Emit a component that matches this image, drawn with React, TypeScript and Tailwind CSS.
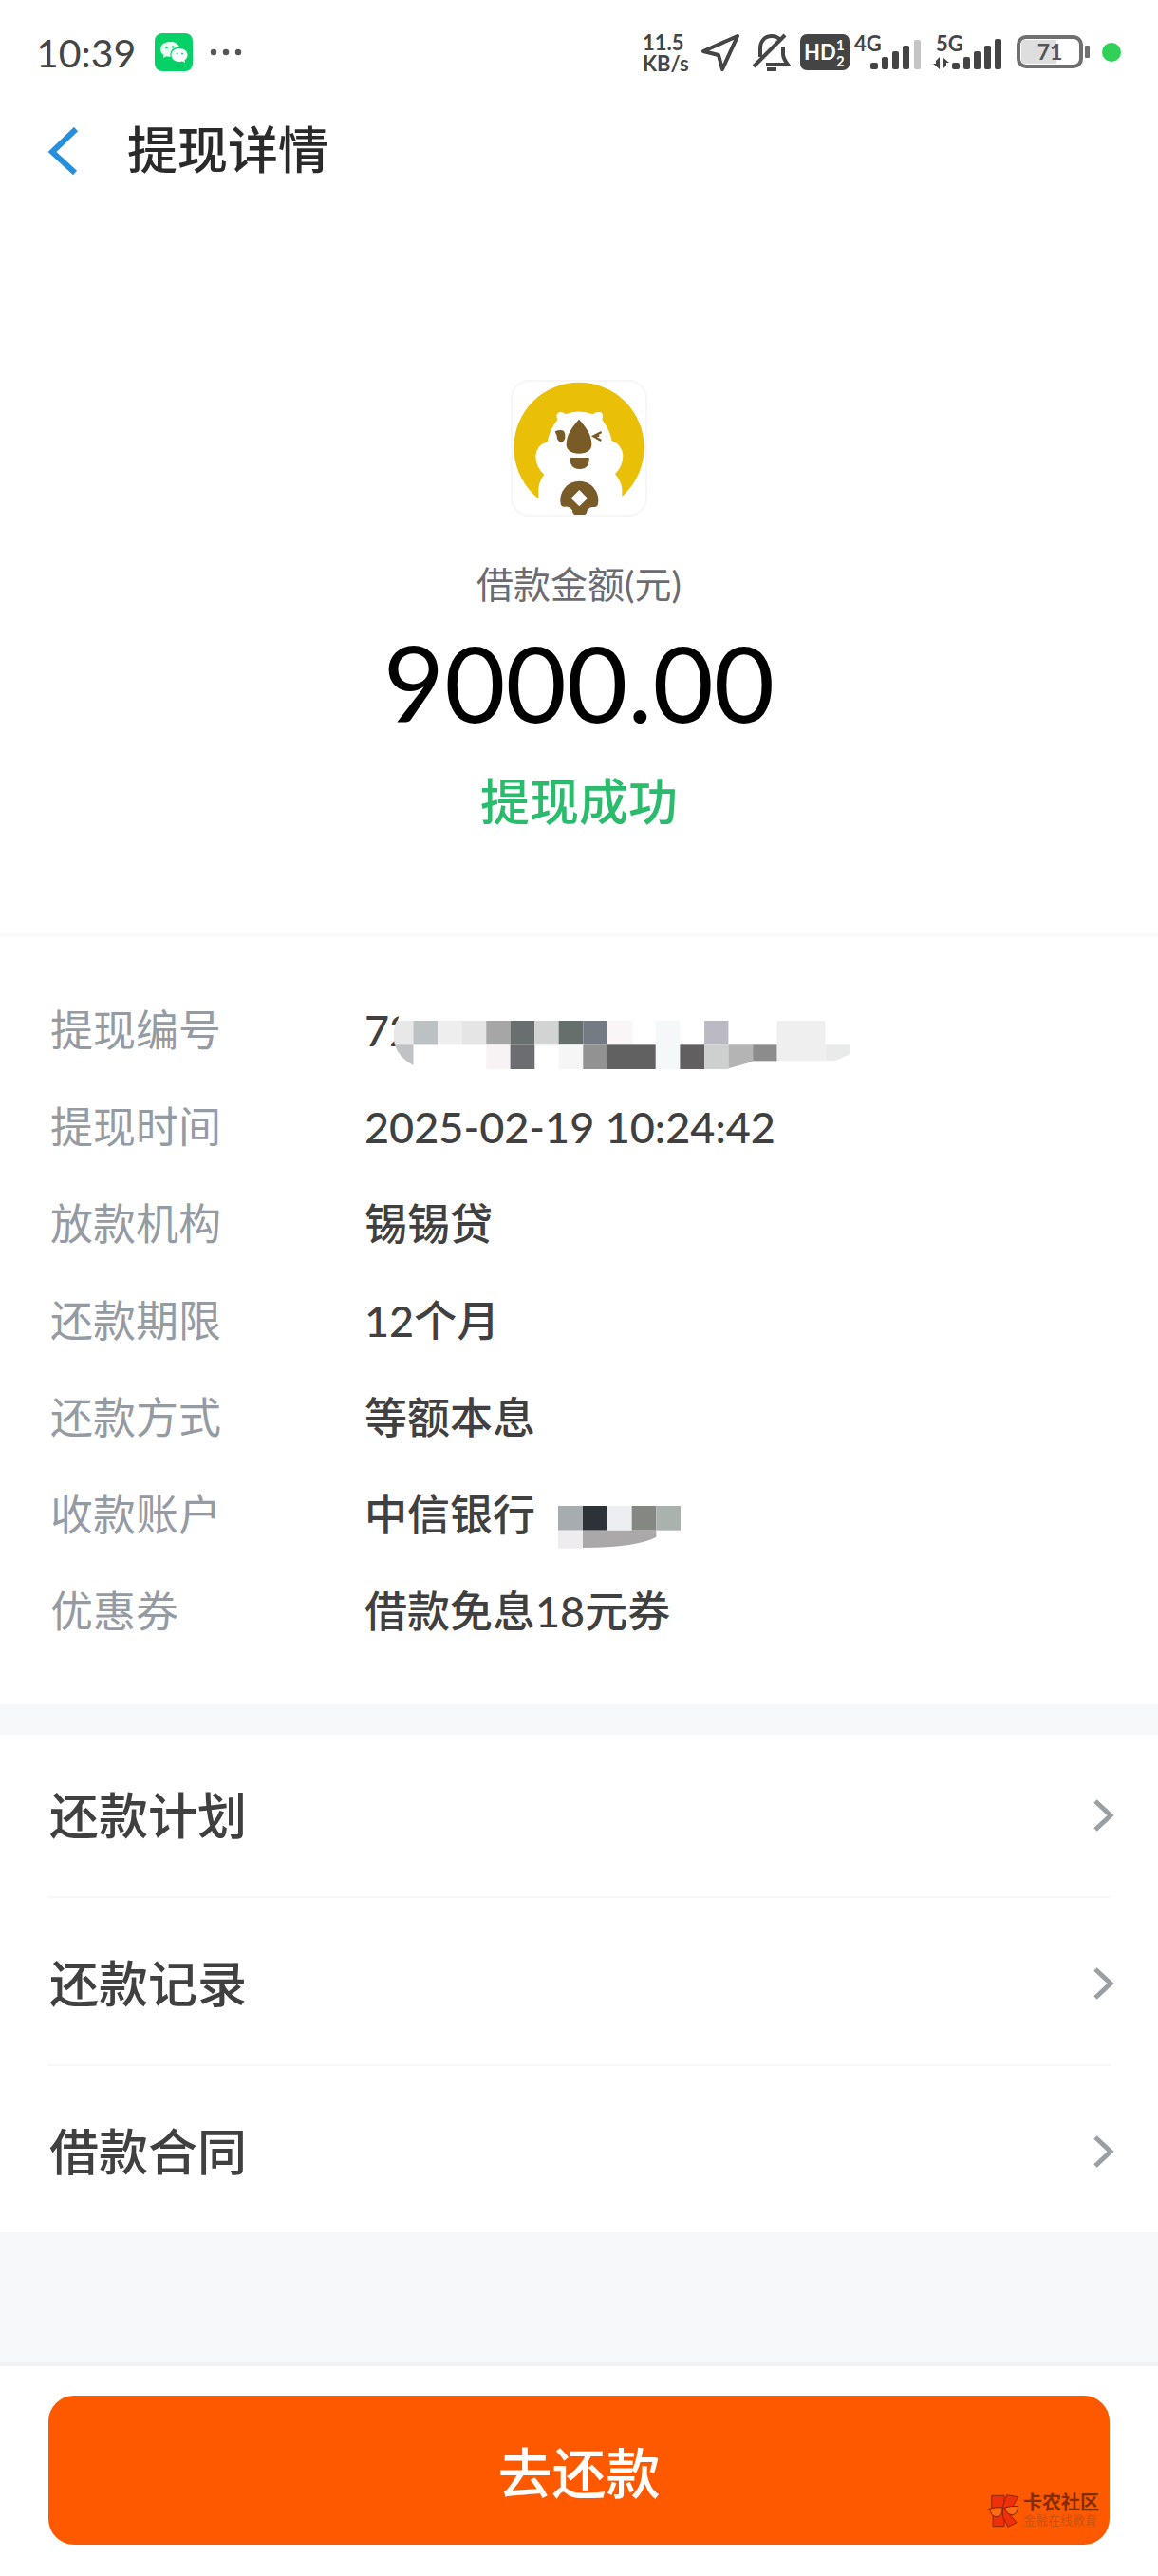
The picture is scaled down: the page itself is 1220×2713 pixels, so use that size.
import React from "react";

const DETAILS = [
  { label: "提现编号", value: "72", mask: "serial" },
  { label: "提现时间", value: "2025-02-19 10:24:42" },
  { label: "放款机构", value: "锡锡贷" },
  { label: "还款期限", value: "12个月" },
  { label: "还款方式", value: "等额本息" },
  { label: "收款账户", value: "中信银行", mask: "card" },
  { label: "优惠券", value: "借款免息18元券" },
];

const LINKS = ["还款计划", "还款记录", "借款合同"];

function WeChatIcon() {
  return (
    <svg viewBox="0 0 40 40" className="size-10" aria-hidden="true">
      <rect width="40" height="40" rx="8" fill="#06d167" />
      <path d="M16 9c-6 0-10 3.600-10 8 0 2.600 1.400 4.700 3.600 6.100L9 26l3.500-1.800c1.500.4 2.500.5 4 .5C15.500 18 20 14.500 26 14.500 25 11 21 9 16 9z" fill="#e9fff2" />
      <path d="M26 16c-5 0-8.500 3.200-8.500 7s3.500 7 8.500 7c1.200 0 2.200-.2 3.200-.5L32 31l-.6-2.600c1.900-1.300 3.100-3.200 3.100-5.400 0-3.800-3.500-7-8.500-7z" fill="#fff" />
      <g fill="#06d167">
        <circle cx="12.500" cy="15" r="1.300" />
        <circle cx="19" cy="14.500" r="1.300" />
        <circle cx="23.500" cy="21.500" r="1" />
        <circle cx="29" cy="21.500" r="1" />
      </g>
    </svg>
  );
}

function StatusBar() {
  return (
    <div className="flex h-[108px] items-center justify-between pl-[38px] pr-[39px] pt-[2px] text-[#454545]">
      <div className="flex items-center">
        <span className="w-[125px] text-[41px] leading-none">10:39</span>
        <WeChatIcon />
        <svg viewBox="0 0 34 8" className="ml-[18px] h-2 w-[34px]" fill="#555" aria-hidden="true">
          <circle cx="4" cy="4" r="3.200" />
          <circle cx="17" cy="4" r="3.200" />
          <circle cx="30" cy="4" r="3.200" />
        </svg>
      </div>

      <div className="flex items-center">
        <div className="w-[61px] pt-[2px] text-[22px] font-bold leading-[22px]">
          <div>11.5</div>
          <div>KB/s</div>
        </div>
        <svg viewBox="0 0 42 42" className="size-[42px]" fill="none" stroke="#454545" strokeWidth="4" strokeLinejoin="round" aria-hidden="true">
          <path d="M39 4L3 20l16 4 4 15z" />
        </svg>
        {/* muted bell */}
        <svg viewBox="0 0 40 42" className="ml-[13px] h-[42px] w-10" fill="none" stroke="#454545" strokeWidth="4" aria-hidden="true">
          <path d="M8 26V17C8 9 13 4 20 4c4 0 7 1.500 9 4" />
          <path d="M1 36L34 3" />
          <path d="M32 15v8c0 4 2 7 5 11H14" />
          <path d="M15 39h10" />
        </svg>
        <svg viewBox="0 0 52 38" className="ml-[10px] h-[38px] w-[52px]" aria-hidden="true">
          <rect width="52" height="38" rx="7" fill="#444" />
          <text x="4" y="27" fill="#fff" fontFamily="Lato, sans-serif" fontWeight="700" fontSize="22">HD</text>
          <text x="38" y="17" fill="#fff" fontFamily="Lato, sans-serif" fontWeight="700" fontSize="15">1</text>
          <text x="38" y="34" fill="#fff" fontFamily="Lato, sans-serif" fontWeight="700" fontSize="15">2</text>
        </svg>
        <svg viewBox="0 -8 72 58" className="ml-1 h-[58px] w-[72px]" fill="#444" aria-hidden="true">
          <text x="1" y="20" fontFamily="Lato, sans-serif" fontWeight="700" fontSize="22">4G</text>
          <rect x="18" y="32" width="8" height="7" rx="2" />
          <rect x="30" y="26" width="7" height="13" rx="2" />
          <rect x="41" y="20" width="7" height="19" rx="2" />
          <rect x="52" y="14" width="7" height="25" rx="2" />
          <rect x="64" y="8" width="7" height="31" rx="2" fill="#c4c4c4" />
        </svg>
        <svg viewBox="0 -8 74 58" className="ml-3 h-[58px] w-[74px]" fill="#444" aria-hidden="true">
          <text x="3" y="20" fontFamily="Lato, sans-serif" fontWeight="700" fontSize="22">5G</text>
          <path d="M7 26v13l-7-6h3v-3zM10 39V26l7 6h-3v3z" />
          <rect x="20" y="32" width="8" height="7" rx="2" />
          <rect x="32" y="26" width="7" height="13" rx="2" />
          <rect x="43" y="20" width="7" height="19" rx="2" />
          <rect x="54" y="14" width="7" height="25" rx="2" />
          <rect x="65" y="7" width="7" height="32" rx="2" />
        </svg>
        <svg viewBox="0 0 78 36" className="ml-[14px] h-9 w-[78px]" aria-hidden="true">
          <rect x="2" y="2" width="66" height="31" rx="8" fill="#fff" stroke="#707070" strokeWidth="4" />
          <path d="M8 5h34v25H8q-3 0-3-3V8q0-3 3-3z" fill="#dedede" />
          <rect x="72" y="11" width="5" height="13" rx="1" fill="#707070" />
          <text x="35" y="26" textAnchor="middle" fill="#555" fontFamily="Lato, sans-serif" fontWeight="700" fontSize="23">71</text>
        </svg>
        <span className="ml-3 size-5 rounded-full bg-[#31d158]" />
      </div>
    </div>
  );
}

function LenderLogo() {
  return (
    <svg viewBox="0 0 432 432" className="size-36" role="img" aria-label="锡锡贷">
      <rect x="3" y="3" width="426" height="426" rx="56" fill="#fff" stroke="#f6f6f6" strokeWidth="6" />
      <circle cx="216" cy="214" r="206" fill="#e9bf08" />
      <path
        d="M88 426V345Q90 316 106 300Q79 275 79 240Q82 207 116 196Q122 160 148 126Q140 108 155 102Q166 101 173 109Q216 92 260 109Q270 99 286 103Q294 110 289 126Q314 160 320 193Q352 205 355 240Q354 275 330 298Q350 320 352 345V426Z"
        fill="#fff"
      />
      <g fill="#785b26">
        <path d="M216 125C236 147 256 172 256 204C256 223 240 233 216 233C192 233 176 223 176 204C176 172 196 147 216 125Z" />
        <path d="M140 163Q158 156 168 162Q174 170 172 184Q168 199 156 197Q145 190 146 177Z" />
        <path d="M188 246H248Q250 282 218 282Q186 282 188 246Z" />
        <path d="M158 391A60 60 0 1 1 276 391Q276 403 262 402Q250 401 242 412Q241 426 232 426H203Q195 424 195 412Q184 399 172 401Q158 402 158 391Z" />
      </g>
      <path d="M287 165L262 178L286 192M266 178L280 176" fill="none" stroke="#785b26" strokeWidth="7" />
      <path d="M217 348L243 374L217 400L191 374Z" fill="#fff" />
    </svg>
  );
}

// [x, y, width, height, colour]
type Cell = [number, number, number, number, string];

const SERIAL_CELLS: Cell[] = [
  [183, 105, 72, 76, "#bcc1c4"],
  [255, 105, 71, 76, "#eeeeee"],
  [326, 105, 72, 76, "#e5e5e5"],
  [398, 105, 71, 76, "#a6a6a6"],
  [469, 105, 72, 76, "#696f6f"],
  [541, 105, 71, 76, "#d2d4d4"],
  [612, 105, 72, 76, "#65706d"],
  [684, 105, 71, 76, "#747b85"],
  [755, 105, 76, 76, "#faf6f7"],
  [898, 105, 72, 153, "#f5f8f8"],
  [1042, 105, 71, 76, "#bbbac3"],
  [1256, 105, 143, 127, "#efefef"],
  [398, 181, 71, 77, "#f7f2f4"],
  [469, 181, 72, 77, "#6c6d70"],
  [612, 181, 72, 77, "#f6f6f6"],
  [684, 181, 71, 77, "#929292"],
  [755, 181, 143, 77, "#616161"],
  [970, 181, 72, 77, "#625f61"],
  [1042, 181, 71, 77, "#ced0d0"],
  [1185, 181, 71, 51, "#8c8c8c"],
];

const CARD_CELLS: Cell[] = [
  [655, 138, 78, 77, "#a7adae"],
  [733, 138, 77, 77, "#2d3138"],
  [810, 138, 78, 77, "#edeef2"],
  [888, 138, 77, 77, "#858783"],
  [965, 138, 77, 77, "#aab2ae"],
  [655, 215, 78, 57, "#eeecee"],
];

function Cells({ cells }: { cells: Cell[] }) {
  return (
    <>
      {cells.map(([x, y, w, h, fill]) => (
        <rect key={`${x}-${y}`} x={x} y={y} width={w} height={h} fill={fill} />
      ))}
    </>
  );
}

function SerialMask() {
  return (
    <svg viewBox="120 12 1356 252" preserveAspectRatio="none" className="-ml-[23px] h-[84px] w-[484px]" aria-hidden="true">
      <path d="M146 60Q143 96 128 120Q120 145 128 168Q130 180 134 200H240V60Z" fill="#fff" />
      <path d="M183 105H134Q119 140 128 181H183Z" fill="#e8e8e8" />
      <path d="M128 181H183V246Q140 222 128 181Z" fill="#c0c3c6" />
      <Cells cells={SERIAL_CELLS} />
      <path d="M1113 181H1185V234L1113 256Z" fill="#b4b4b4" />
      <path d="M1399 181H1473V210L1430 231H1399Z" fill="#e9ebea" />
    </svg>
  );
}

function CardMask() {
  return (
    <svg viewBox="655 63 387 210" className="ml-6 h-[70px] w-[129px]" aria-hidden="true">
      <Cells cells={CARD_CELLS} />
      <path d="M733 215H965V236Q910 268 733 270Z" fill="#aaa8a9" />
    </svg>
  );
}

function Watermark() {
  return (
    <div className="pointer-events-none absolute bottom-[50px] right-[62px] flex items-center gap-1">
      <svg viewBox="0 0 102 106" className="h-[35px] w-[34px]" aria-hidden="true">
        <g fill="#f0300a" stroke="#8c2600" strokeWidth="3">
          <path d="M14 4H54V102H18V70L14 44Z" />
          <path d="M62 2L98 8L80 42L60 52L94 90L66 104L50 72L48 44Z" />
        </g>
        <g fill="#ff6a14" stroke="#7a2400" strokeWidth="3">
          <path d="M8 46Q24 40 48 42Q50 70 30 72Q10 70 8 46Z" />
          <path d="M56 42Q76 36 98 38Q98 62 80 66Q60 64 56 42Z" />
          <path d="M1 50L8 46M48 44H56" />
        </g>
      </svg>
      <div>
        <div className="text-[20px] font-bold leading-[21px] text-[#822d00]">卡农社区</div>
        <div className="text-[13px] leading-[17px] text-[#c9520e]">金融在线教育</div>
      </div>
    </div>
  );
}

export default function App() {
  return (
    <div className="flex min-h-screen flex-col bg-[#f7f8fa] font-['Lato','Noto_Sans_CJK_SC',sans-serif] text-[#404040]">
      <header className="bg-white">
        <StatusBar />
        <div className="flex h-[98px] items-center pl-[50px]">
          <button type="button" aria-label="返回" className="w-[84px] pt-1">
            <svg viewBox="0 0 34 50" className="h-[50px] w-[34px]" fill="none" stroke="#258fdc" strokeWidth="6" aria-hidden="true">
              <path d="M30 2L5 26l24 22" />
            </svg>
          </button>
          <h1 className="text-[53px] font-medium leading-none text-[#2a2a2a]">提现详情</h1>
        </div>
      </header>

      <main>
        <section className="flex flex-col items-center border-b-4 border-[#fafafa] bg-white pb-[100px] pt-[194px]">
          <LenderLogo />
          <p className="mt-[42px] text-[39px] leading-[58px] text-[#6b6b70]">借款金额(元)</p>
          <p className="mt-[18px] text-[111px] leading-[112px] text-black">9000.00</p>
          <p className="mt-[31px] text-[52px] font-medium leading-[78px] text-[#2abb6d]">提现成功</p>
        </section>

        <dl className="bg-white px-[53px] pb-[46px] pt-12 text-[45px]">
          {DETAILS.map((item) => (
            <div key={item.label} className="flex h-[102px] items-center">
              <dt className="w-[331px] text-[#959ba3]">{item.label}</dt>
              <dd className="flex items-center font-medium">
                <span>{item.value}</span>
                {item.mask === "serial" && <SerialMask />}
                {item.mask === "card" && <CardMask />}
              </dd>
            </div>
          ))}
        </dl>

        <nav className="mt-8 bg-white px-[50px]">
          {LINKS.map((name) => (
            <a
              key={name}
              href="#"
              className="flex h-[177px] items-center justify-between border-b-2 border-[#f8f8f8] pl-[2px] pt-1 text-[52px] font-medium first:h-[172px] first:pt-0 last:h-[175px] last:border-b-0"
            >
              {name}
              <svg viewBox="0 0 22 34" className="-mr-1 h-[34px] w-[22px]" fill="none" stroke="#9a9fa3" strokeWidth="5" aria-hidden="true">
                <path d="M2 2l16 15L2 32" />
              </svg>
            </a>
          ))}
        </nav>
      </main>

      <footer className="relative mt-auto border-t-4 border-[#eff1f3] bg-white px-[51px] pb-[33px] pt-[31px]">
        <button type="button" className="h-[157px] w-full rounded-[27px] bg-[#ff5900] font-['Noto_Sans_CJK_SC',sans-serif] text-[57px] font-medium text-white">
          去还款
        </button>
        <Watermark />
      </footer>
    </div>
  );
}
